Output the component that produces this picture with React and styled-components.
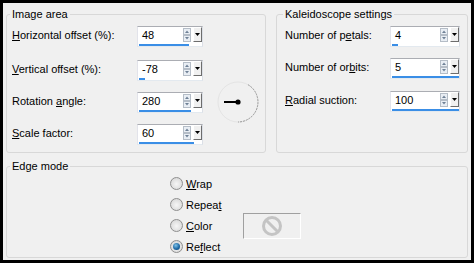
import React from "react";
import styled, { createGlobalStyle } from "styled-components";

const GlobalStyle = createGlobalStyle`
    body {
        margin: 0;
        background: #000;
    }
`;

const Window = styled.div`
    width: 474px;
    height: 263px;
    box-sizing: border-box;
    border: 3px solid #000;
    background: #f0f0f0;
    padding: 4px 3px 2px 3px;
    display: flex;
    flex-direction: column;
    gap: 6px;
    font-family: "Liberation Sans", Arial, sans-serif;
    font-size: 11px;
    color: #000;
`;

const TopRow = styled.div`
    display: flex;
    gap: 10px;
    height: 148px;
`;

const Group = styled.fieldset`
    margin: 0;
    box-sizing: border-box;
    width: ${props => props.$width ? props.$width + "px" : "auto"};
    flex: ${props => props.$width ? "none" : "1"};
    border: 1px solid #d8d8d8;
    border-radius: 3px;
    padding: ${props => props.$pad || "5px 0 0 5px"};
    min-width: 0;
`;

const Legend = styled.legend`
    padding: 0 2px;
    margin-left: -2px;
    line-height: 14px;
`;

const Body = styled.div`
    display: flex;
    align-items: flex-start;
`;

const Form = styled.div`
    display: flex;
    flex-direction: column;
`;

const Row = styled.div`
    display: flex;
    align-items: flex-start;
    margin-top: ${props => props.$mt || 0}px;
`;

const Label = styled.span`
    width: ${props => props.$w}px;
    line-height: 17px;
    padding-top: 1px;
`;

const Key = styled.u`
    text-decoration: underline;
    text-underline-offset: 1px;
`;

const SpinFrame = styled.div`
    width: ${props => props.$w}px;
    height: 21px;
    box-sizing: border-box;
    border: 1px solid;
    border-color: #abadb3 #dbdfe6 #e3e9ef #e2e3ea;
    background: #fff;
    display: flex;
    flex-direction: column;
`;

const SpinTop = styled.div`
    display: flex;
    height: 16px;
`;

const Value = styled.span`
    flex: 1;
    padding-left: 4px;
    line-height: 17px;
`;

const Arrows = styled.svg`
    width: 8px;
    height: 14px;
    margin-top: 1px;
    flex: none;
`;

const DropButton = styled.div`
    width: 9px;
    height: 15px;
    margin-left: 2px;
    box-sizing: border-box;
    background: #f0f0f0;
    border: 1px solid;
    border-color: #fff #6d6d6d #6d6d6d #fff;
    display: flex;
    align-items: center;
    justify-content: center;
    flex: none;
`;

const Bar = styled.div`
    height: 3px;
    margin: 1px 0 0 1px;
    width: ${props => props.$fill}px;
    background: #3a8ee6;
`;

const DialBox = styled.svg`
    width: 42px;
    height: 42px;
    margin: 55px 0 0 14px;
    flex: none;
`;

const RadioGrid = styled.div`
    display: grid;
    grid-template-columns: 73px 58px;
    grid-auto-rows: 21px;
    margin-left: 158px;
    align-items: center;
`;

const RadioOption = styled.label`
    grid-column: 1;
    display: flex;
    align-items: center;
    gap: 3px;
`;

const RadioDot = styled.span`
    width: 13px;
    height: 13px;
    box-sizing: border-box;
    border-radius: 50%;
    border: 1px solid #8f8f8f;
    background: radial-gradient(circle at 50% 55%, #f6f6f6 0%, #e2e2e2 55%, #cfcfcf 100%);
    display: flex;
    align-items: center;
    justify-content: center;
    flex: none;

    &::after {
        content: "";
        width: 7px;
        height: 7px;
        border-radius: 50%;
        display: ${props => props.$checked ? "block" : "none"};
        background: radial-gradient(circle at 40% 35%, #7fc2e8 0%, #1f6aa5 55%, #0d3f6e 100%);
    }
`;

const Swatch = styled.div`
    grid-column: 2;
    grid-row: 3;
    height: 26px;
    box-sizing: border-box;
    border: 1px solid;
    border-color: #a0a0a0 #fff #fff #a0a0a0;
    display: flex;
    align-items: center;
    justify-content: center;
`;

const SpinBox = ({ value, width, fill }) => (
    <SpinFrame $w={width}>
        <SpinTop>
            <Value>{value}</Value>
            <Arrows viewBox="0 0 8 14">
                <rect x="0.5" y="0.5" width="7" height="6" fill="#e9eef4" stroke="#b5bdc7" />
                <rect x="0.5" y="7.5" width="7" height="6" fill="#e9eef4" stroke="#b5bdc7" />
                <path d="M2 5 L4 2.5 L6 5 Z" fill="#6f8196" />
                <path d="M2 9 L4 11.5 L6 9 Z" fill="#6f8196" />
            </Arrows>
            <DropButton>
                <svg width="5" height="3" viewBox="0 0 5 3">
                    <path d="M0 0 L5 0 L2.5 3 Z" fill="#000" />
                </svg>
            </DropButton>
        </SpinTop>
        <Bar $fill={fill} />
    </SpinFrame>
);

const Dial = () => (
    <DialBox viewBox="0 0 42 42">
        <circle cx="21" cy="21" r="20" fill="none" stroke="#e4e4e4" strokeWidth="1" />
        <path d="M31 3.7 A20 20 0 0 1 21 41" fill="none" stroke="#9a9a9a" strokeWidth="1" strokeDasharray="2 1" />
        <line x1="7" y1="21" x2="21" y2="21" stroke="#000" strokeWidth="2" />
        <circle cx="21" cy="21" r="2.6" fill="#000" />
    </DialBox>
);

const NoSign = () => (
    <svg width="22" height="22" viewBox="0 0 22 22">
        <circle cx="11" cy="11" r="8.5" fill="none" stroke="#c4c4c4" strokeWidth="3" />
        <line x1="5" y1="5" x2="17" y2="17" stroke="#c4c4c4" strokeWidth="3" />
    </svg>
);

const imageRows = [
    { label: <><Key>H</Key>orizontal offset (%):</>, value: "48", fill: 50, mt: 0 },
    { label: <><Key>V</Key>ertical offset (%):</>, value: "-78", fill: 6, mt: 13 },
    { label: <>Rotation <Key>a</Key>ngle:</>, value: "280", fill: 52, mt: 11 },
    { label: <><Key>S</Key>cale factor:</>, value: "60", fill: 55, mt: 11 },
];

const kaleidoRows = [
    { label: <>Number of p<Key>e</Key>tals:</>, value: "4", fill: 6, mt: 0 },
    { label: <>Number of or<Key>b</Key>its:</>, value: "5", fill: 67, mt: 11 },
    { label: <><Key>R</Key>adial suction:</>, value: "100", fill: 67, mt: 12 },
];

const edgeModes = [
    { label: <><Key>W</Key>rap</> },
    { label: <>Repea<Key>t</Key></> },
    { label: <><Key>C</Key>olor</> },
    { label: <>Re<Key>f</Key>lect</>, checked: true },
];

const App = () => (
    <>
        <GlobalStyle />
        <Window>
            <TopRow>
                <Group $width={260}>
                    <Legend>Image area</Legend>
                    <Body>
                        <Form>
                            {imageRows.map((r, i) => (
                                <Row key={i} $mt={r.mt}>
                                    <Label $w={125}>{r.label}</Label>
                                    <SpinBox value={r.value} width={66} fill={r.fill} />
                                </Row>
                            ))}
                        </Form>
                        <Dial />
                    </Body>
                </Group>
                <Group $pad="5px 0 0 8px">
                    <Legend>Kaleidoscope settings</Legend>
                    <Form>
                        {kaleidoRows.map((r, i) => (
                            <Row key={i} $mt={r.mt}>
                                <Label $w={105}>{r.label}</Label>
                                <SpinBox value={r.value} width={70} fill={r.fill} />
                            </Row>
                        ))}
                    </Form>
                </Group>
            </TopRow>
            <Group $pad="0 0 0 5px">
                <Legend>Edge mode</Legend>
                <RadioGrid>
                    {edgeModes.map((m, i) => (
                        <RadioOption key={i} style={{ gridRow: i + 1 }}>
                            <RadioDot $checked={m.checked} />
                            <span>{m.label}</span>
                        </RadioOption>
                    ))}
                    <Swatch>
                        <NoSign />
                    </Swatch>
                </RadioGrid>
            </Group>
        </Window>
    </>
);

export default App;
